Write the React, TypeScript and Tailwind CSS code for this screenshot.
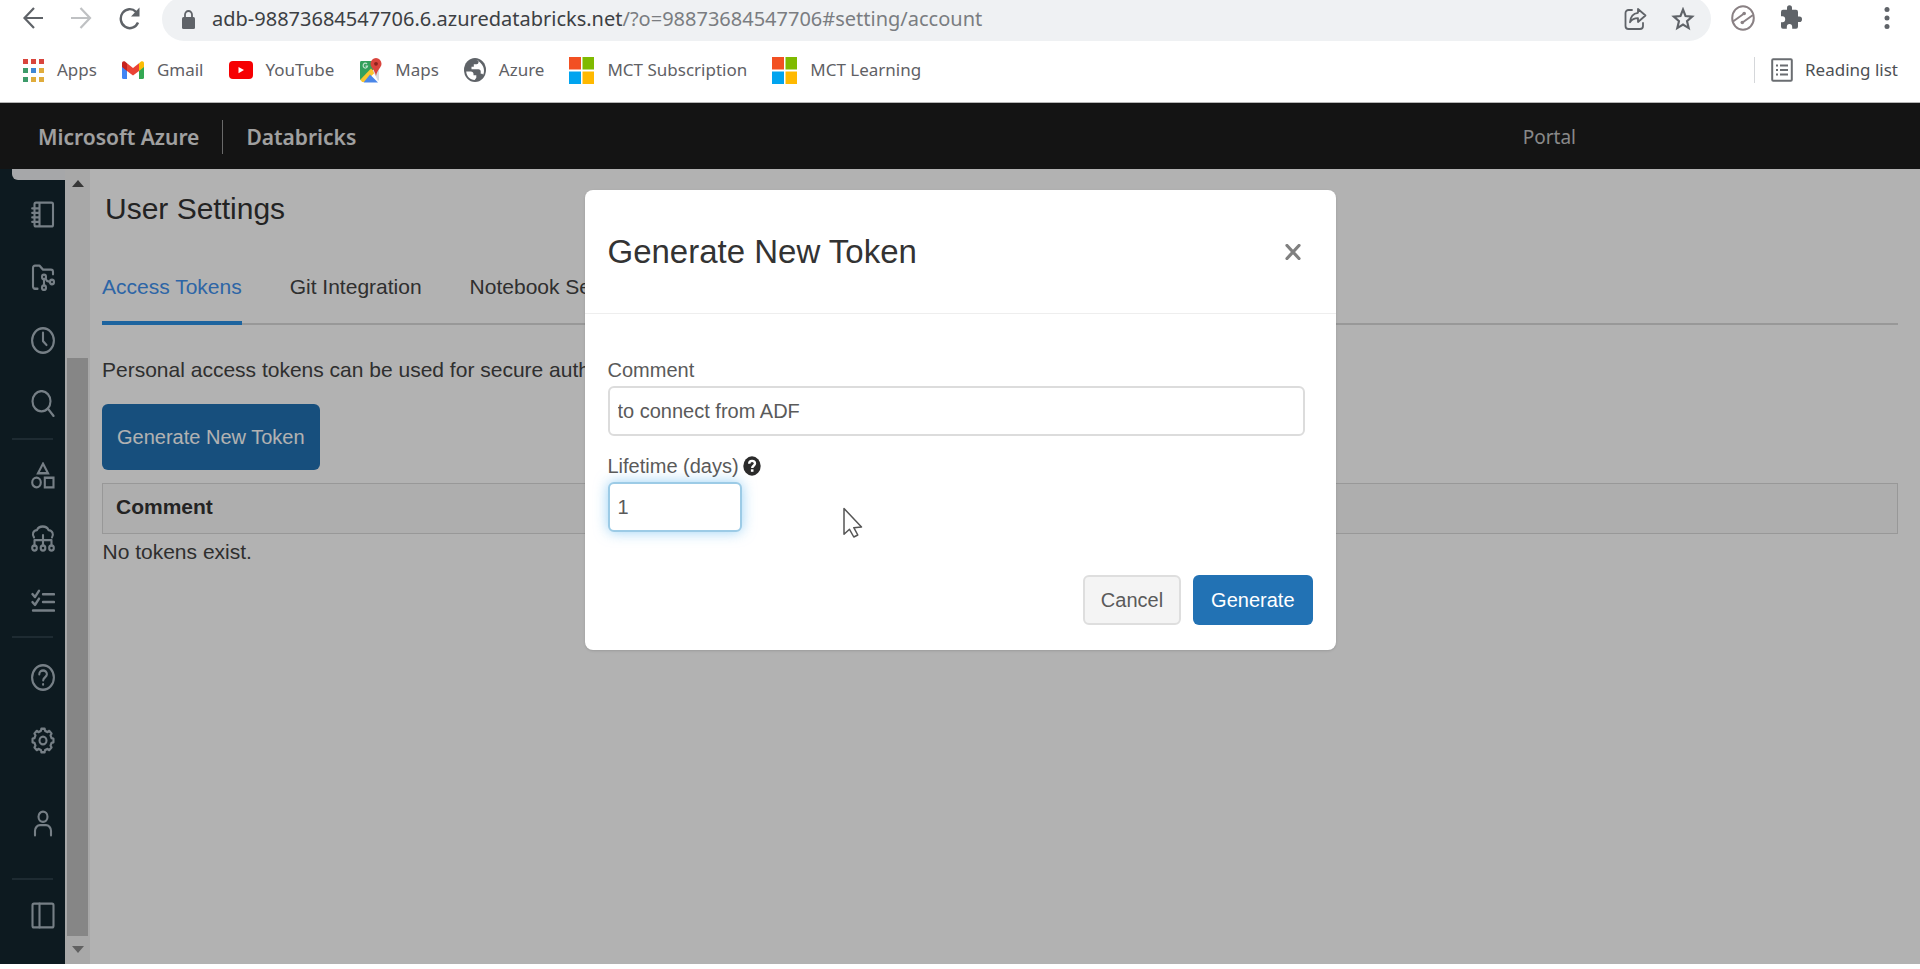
import type { ReactNode } from "react";

const sans = "font-['Liberation_Sans',Arial,sans-serif]";
const chrome = "font-['Noto_Sans','Segoe_UI',sans-serif]";

function LineIcon({ children, width = 2.1 }: { children: ReactNode; width?: number }) {
  return (
    <svg
      viewBox="0 0 24 24"
      preserveAspectRatio="none"
      className="h-[27px] w-6"
      fill="none"
      stroke="currentColor"
      strokeWidth={width}
      strokeLinecap="round"
      strokeLinejoin="round"
      aria-hidden="true"
    >
      {children}
    </svg>
  );
}

function gearOutline(teeth: number, outer: number, inner: number) {
  const step = (Math.PI * 2) / teeth;
  const corners: string[] = [];
  for (let i = 0; i < teeth; i++) {
    const middle = i * step - Math.PI / 2;
    const points: [number, number][] = [
      [-0.3, inner],
      [-0.2, outer],
      [0.2, outer],
      [0.3, inner],
    ];
    for (const [turn, radius] of points) {
      const angle = middle + turn * step;
      corners.push(`${(12 + radius * Math.cos(angle)).toFixed(2)} ${(12 + radius * Math.sin(angle)).toFixed(2)}`);
    }
  }
  return `M${corners.join("L")}Z`;
}

function NavItem({ label, children }: { label: string; children: ReactNode }) {
  return (
    <a href="#nav" aria-label={label} className="flex h-[63px] items-center justify-end pr-[10px] text-[#a9b7c0]">
      {children}
    </a>
  );
}

function Bookmark({ label, children }: { label: string; children: ReactNode }) {
  return (
    <a href="#bookmark" className="flex items-center gap-[13px] text-[17px] leading-6 text-[#5f6165]">
      {children}
      <span>{label}</span>
    </a>
  );
}

function MicrosoftLogo() {
  return (
    <svg viewBox="0 0 25 27" className="h-[27px] w-[25px]" aria-hidden="true">
      <path fill="#f25022" d="M0 0h12v12.500H0z" />
      <path fill="#7fba00" d="M13.500 0h11.500v12.500H13.500z" />
      <path fill="#00a4ef" d="M0 14.500h12V27H0z" />
      <path fill="#ffb900" d="M13.500 14.500h11.500V27H13.500z" />
    </svg>
  );
}

function BrowserToolbar() {
  return (
    <div className="flex h-[41px] items-center pr-[24px] pl-[22px] text-[#5f6368]">
      <button type="button" aria-label="Back" className="mr-6 -mt-[6px]">
        <svg viewBox="0 0 24 24" className="h-6 w-6" fill="none" stroke="currentColor" strokeWidth="2.200" aria-hidden="true">
          <path d="M21 12H3M12 2 2.500 12l9.500 10" />
        </svg>
      </button>
      <button type="button" aria-label="Forward" className="mr-6 -mt-[6px] text-[#bfc1c3]">
        <svg viewBox="0 0 24 24" className="h-6 w-6" fill="none" stroke="currentColor" strokeWidth="2.200" aria-hidden="true">
          <path d="M1 12h18M10.500 2l9.500 10-9.500 10" />
        </svg>
      </button>
      <button type="button" aria-label="Reload" className="mr-5 -mt-[6px]">
        <svg viewBox="0 0 24 24" className="h-6 w-6" fill="none" stroke="currentColor" strokeWidth="2.400" aria-hidden="true">
          <path d="M20 16.500A9 9.500 0 1 1 18 5.800" />
          <path d="M21.500 1.500v9h-8.500z" fill="currentColor" stroke="none" />
        </svg>
      </button>
      <div className="-mt-[3px] flex h-[44px] min-w-0 flex-1 items-center rounded-full bg-[#eff1f3] pr-4 pl-5">
        <svg viewBox="0 0 13 19" className="mr-[17px] h-[19px] w-[13px] shrink-0" aria-hidden="true">
          <rect y="7" width="13" height="12" rx="1.500" fill="#5f6368" />
          <path d="M3 8V4.800a3.500 3.800 0 0 1 7 0V8" fill="none" stroke="#5f6368" strokeWidth="1.800" />
        </svg>
        <span className="min-w-0 flex-1 truncate text-xl leading-7 text-[#3c4043]">
          adb-98873684547706.6.azuredatabricks.net<span className="text-[#7a7d81]">/?o=98873684547706#setting/account</span>
        </span>
        <button type="button" aria-label="Share this page" className="mr-6">
          <svg viewBox="0 0 24 24" className="h-6 w-6" fill="none" stroke="currentColor" strokeWidth="1.800" strokeLinejoin="round" aria-hidden="true">
            <path d="M9 3H5.500A3 3 0 0 0 2.500 6v13a3 3 0 0 0 3 3h11.500a3 3 0 0 0 3-3v-3" strokeLinecap="round" />
            <path d="M15 2l7.500 6.500L15 15v-3.800c-3.800 0-6 1-8 4 .4-5.200 3-8.800 8-9.400z" />
          </svg>
        </button>
        <button type="button" aria-label="Bookmark this tab">
          <svg viewBox="0 0 24 24" className="h-6 w-6" fill="none" stroke="currentColor" strokeWidth="2.100" aria-hidden="true">
            <path d="M12 2.500l2.500 6.500 6.700.6-5.200 4.500 1.700 7L12 17.500l-5.700 3.600 1.700-7L2.800 9.600 9.500 9z" />
          </svg>
        </button>
      </div>
      <button type="button" aria-label="Link helper" className="ml-5 -mt-[6px]">
        <svg viewBox="0 0 24 26" className="h-[26px] w-6" fill="none" stroke="#8a8184" strokeWidth="2" aria-hidden="true">
          <ellipse cx="12" cy="13" rx="10.800" ry="11.800" />
          <path d="M2 16.500 12.800 8.800M11.500 17.500 22 10" />
          <circle cx="13.200" cy="8.500" r="1.800" fill="#8a8184" stroke="none" />
          <circle cx="11.300" cy="17.500" r="1.800" fill="#8a8184" stroke="none" />
        </svg>
      </button>
      <button type="button" aria-label="Extensions" className="ml-6 -mt-[6px]">
        <svg viewBox="0 0 24 24" className="h-[27px] w-6" preserveAspectRatio="none" fill="currentColor" aria-hidden="true">
          <path d="M20.500 11H19V7a2 2 0 0 0-2-2h-4V3.500a2.500 2.500 0 0 0-5 0V5H4a2 2 0 0 0-2 2v3.800h1.500a2.700 2.700 0 0 1 0 5.400H2V20a2 2 0 0 0 2 2h3.800v-1.500a2.700 2.700 0 0 1 5.400 0V22H17a2 2 0 0 0 2-2v-4h1.500a2.500 2.500 0 0 0 0-5z" />
        </svg>
      </button>
      <button type="button" aria-label="Browser menu" className="-mt-[6px] ml-[75px]">
        <svg viewBox="0 0 18 24" className="h-6 w-[18px]" fill="currentColor" aria-hidden="true">
          <circle cx="9" cy="3.500" r="2.500" />
          <circle cx="9" cy="12" r="2.500" />
          <circle cx="9" cy="20.500" r="2.500" />
        </svg>
      </button>
    </div>
  );
}

const appDots = [
  "#d9453d", "#d9453d", "#d9453d",
  "#3d9b6a", "#3f87d6", "#e0ac3c",
  "#3d9b6a", "#e0ac3c", "#e0ac3c",
];

function BookmarksBar() {
  return (
    <nav aria-label="Bookmarks" className="flex h-[61px] items-center gap-[25px] pr-[22px] pb-[3px] pl-[23px]">
      <Bookmark label="Apps">
        <svg viewBox="0 0 21 23" className="h-[23px] w-[21px]" aria-hidden="true">
          {appDots.map((fill, i) => (
            <rect key={i} x={(i % 3) * 8} y={Math.floor(i / 3) * 9} width="5" height="5" fill={fill} />
          ))}
        </svg>
      </Bookmark>
      <Bookmark label="Gmail">
        <svg viewBox="0 0 22 18" className="h-[18px] w-[22px]" aria-hidden="true">
          <path fill="#4285f4" d="M0 5l5 4v9H1.500A1.500 1.500 0 0 1 0 16.500z" />
          <path fill="#34a853" d="M22 5l-5 4v9h3.500a1.500 1.500 0 0 0 1.500-1.500z" />
          <path fill="#fbbc04" d="M17 2.300C19.500-.8 22-.2 22 2.500V6l-5 4z" />
          <path fill="#c5221f" d="M5 2.300C2.500-.8 0-.2 0 2.500V6l5 4z" />
          <path fill="#ea4335" d="M5 2.300l6 4.700 6-4.700V10l-6 4.500L5 10z" />
        </svg>
      </Bookmark>
      <Bookmark label="YouTube">
        <svg viewBox="0 0 24 18" className="h-[18px] w-6" aria-hidden="true">
          <rect width="24" height="18" rx="4" fill="#f60002" />
          <path d="M9.500 6v6.200L15 9z" fill="#fff" />
        </svg>
      </Bookmark>
      <Bookmark label="Maps">
        <svg viewBox="0 0 23 25" className="h-[25px] w-[23px]" aria-hidden="true">
          <path fill="#34a05c" d="M2 3h13v8L2 22.500Q1 22 1 20V4.500Q1 3 2 3z" />
          <path fill="#fbc52d" d="M1.500 21.500 12 10.500l4 4L6 24H3z" />
          <path fill="#d9dce0" d="M14 13l6-3v12l-1 1z" />
          <path fill="#4a86e8" d="M4.500 24.500 11 16.500l8 8z" />
          <path fill="#d9453d" d="M17 0a5.500 5.800 0 0 1 5.500 5.800c0 4-4 5.200-5.500 12.200-1.500-7-5.500-8.200-5.500-12.200A5.500 5.800 0 0 1 17 0z" />
          <circle cx="17" cy="5.800" r="1.900" fill="#8c231d" />
          <path fill="none" stroke="#bfe0cb" strokeWidth="1.200" d="M8 6a2.200 2.400 0 1 0 .5 2.200H6.500" />
        </svg>
      </Bookmark>
      <Bookmark label="Azure">
        <svg viewBox="0 0 22 24" className="h-6 w-[22px]" aria-hidden="true">
          <ellipse cx="11" cy="12" rx="11" ry="12" fill="#5f6368" />
          <path
            fill="#fff"
            d="M2.200 13.500h4.600c1.700 0 2.700 1 2.700 2.500v1.200h2.800v2.600l-1.600 2.200c-4.700-.1-8.200-3.700-8.500-8.500zM12.500 2.200c.6 0 1.300.2 2 .5v1.600c0 1.200-.8 2-1.900 2H9.800v2.400H7.500v2.500h7c1.300 0 2.200 1 2.200 2.200v2.400h1.600l.9.900c1.200-2.300 1-5.600 0-7.900-1.200-2.700-3.500-5.500-6.700-6.600z"
          />
        </svg>
      </Bookmark>
      <Bookmark label="MCT Subscription">
        <MicrosoftLogo />
      </Bookmark>
      <Bookmark label="MCT Learning">
        <MicrosoftLogo />
      </Bookmark>
      <div className="ml-auto flex items-center gap-4">
        <span className="h-[26px] w-px bg-[#d5d7da]" />
        <button type="button" className="flex items-center gap-3 text-[17px] leading-6 text-[#4d5054]">
          <svg viewBox="0 0 22 24" className="h-6 w-[22px]" fill="none" stroke="#6a6d71" strokeWidth="2" aria-hidden="true">
            <rect x="1.200" y="1.200" width="19.600" height="21.600" rx="1" />
            <path d="M9 7.500h8M9 12h8M9 16.500h8M5 7.500h2M5 12h2M5 16.500h2" />
          </svg>
          Reading list
        </button>
      </div>
    </nav>
  );
}

function Sidebar() {
  return (
    <nav aria-label="Workspace" className="w-[65px] shrink-0 bg-[#14262e] pb-3">
      <div className="ml-3 h-[11px] rounded-bl-md bg-[#eef0f2]" />
      <div className="h-[3px]" />
      <NavItem label="Notebooks">
        <LineIcon>
          <path d="M5 1.500h15.500a1.500 1.500 0 0 1 1.500 1.500v18a1.500 1.500 0 0 1-1.500 1.500H5a1.500 1.500 0 0 1-1.500-1.500V3A1.500 1.500 0 0 1 5 1.500zM8.500 1.500v21M1.200 6.500h6M1.200 10.500h6M1.200 14.500h6M1.200 18.500h6" />
        </LineIcon>
      </NavItem>
      <NavItem label="Repos">
        <LineIcon>
          <path d="M6.500 22H4a2 2 0 0 1-2-2V3.500a2 2 0 0 1 2-2h4.500L12 5h8a2 2 0 0 1 2 2v2" />
          <circle cx="13" cy="11.500" r="2" />
          <circle cx="13" cy="21" r="2" />
          <circle cx="21" cy="16" r="2" />
          <path d="M13 13.500V19M14.500 13l1.500 2 3 1" />
        </LineIcon>
      </NavItem>
      <NavItem label="Recents">
        <LineIcon>
          <circle cx="12" cy="12" r="10.900" />
          <path d="M12 5v7.500l3.500 3.500" />
        </LineIcon>
      </NavItem>
      <NavItem label="Search">
        <LineIcon>
          <circle cx="10.500" cy="10" r="9" />
          <path d="M16.800 16.500 22.500 23" />
        </LineIcon>
      </NavItem>
      <hr className="mt-[3px] mr-3 mb-1 ml-3 h-[2px] border-0 bg-[#2b3e48]" />
      <NavItem label="Data">
        <LineIcon>
          <path d="M12 1.500 17 10H7zM13.800 14h8.700v8.500h-8.700z" strokeLinejoin="miter" />
          <circle cx="5.500" cy="18.200" r="4.300" />
        </LineIcon>
      </NavItem>
      <NavItem label="Compute">
        <LineIcon>
          <path d="M3 11C.8 8.500 2 4.800 6 4.500 8 .3 15.500.3 17.500 4.500c4 .3 5.500 4 3.500 6.500M12 9v9M3.500 18v-4.500h17V18" />
          <circle cx="3.500" cy="20.500" r="2.300" />
          <circle cx="12" cy="20.500" r="2.300" />
          <circle cx="20.500" cy="20.500" r="2.300" />
        </LineIcon>
      </NavItem>
      <NavItem label="Jobs">
        <LineIcon width={2.3}>
          <path d="M1.500 5.500 4 8l4-5.500M1.500 12.500 4 15l4-5.500M12 5.500h11M12 12.500h11M2 20h21" />
        </LineIcon>
      </NavItem>
      <hr className="mt-[3px] mr-3 mb-[8px] ml-3 h-[2px] border-0 bg-[#2b3e48]" />
      <NavItem label="Help">
        <LineIcon>
          <circle cx="12" cy="12" r="10.900" />
          <path d="M8.300 9.200c0-4.700 7.600-4.500 7.600 0 0 2.500-3.700 2.600-3.700 5.300M12.100 18v.3" />
        </LineIcon>
      </NavItem>
      <NavItem label="Settings">
        <LineIcon>
          <path d={gearOutline(8, 10.6, 8.8)} />
          <circle cx="12" cy="12" r="3.500" />
        </LineIcon>
      </NavItem>
      <div className="h-5" />
      <NavItem label="Account">
        <LineIcon>
          <circle cx="12" cy="6" r="4.500" />
          <path d="M4 22.500v-4a5 5 0 0 1 5-5h6a5 5 0 0 1 5 5v4" />
        </LineIcon>
      </NavItem>
      <hr className="mt-[23px] mr-3 mb-1 ml-3 h-[2px] border-0 bg-[#2b3e48]" />
      <NavItem label="Toggle sidebar">
        <LineIcon>
          <rect x="1.500" y="1.500" width="21" height="21" rx="1.500" />
          <path d="M8.500 1.500v21" />
        </LineIcon>
      </NavItem>
    </nav>
  );
}

function ScrollRail() {
  return (
    <div aria-hidden="true" className="flex w-[25px] shrink-0 flex-col items-center bg-[#f1f1f1] pt-[11px] pb-[11px]">
      <svg viewBox="0 0 12 7" className="h-[7px] w-3" fill="#505050">
        <path d="M6 0l6 7H0z" />
      </svg>
      <div className="mt-[171px] w-[21px] flex-1 bg-[#c1c1c1]" />
      <svg viewBox="0 0 12 7" className="mt-[10px] h-[7px] w-3" fill="#8b8b8b">
        <path d="M6 7l6-7H0z" />
      </svg>
    </div>
  );
}

function SettingsPage() {
  return (
    <main className="min-w-0 flex-1 pr-[22px] pl-3 text-[21px] leading-7 text-[#444]">
      <h1 className="pt-5 pl-[3px] text-[30px] leading-10 text-[#333]">User Settings</h1>
      <div role="tablist" className="mt-11 flex gap-12 border-b-2 border-[#dadada]">
        <button type="button" role="tab" aria-selected="true" className="-mb-[2px] border-b-4 border-[#2a90e4] pb-5 text-[#4191ee]">
          Access Tokens
        </button>
        <button type="button" role="tab" aria-selected="false" className="pb-[22px]">
          Git Integration
        </button>
        <button type="button" role="tab" aria-selected="false" className="pb-[22px]">
          Notebook Settings
        </button>
      </div>
      <p className="mt-[31px]">Personal access tokens can be used for secure auth</p>
      <button type="button" className="mt-5 h-[66px] rounded-md bg-[#2272b4] px-[15px] text-xl text-white">
        Generate New Token
      </button>
      <table className="mt-[13px] w-full border-collapse text-left">
        <thead>
          <tr>
            <th className="h-[50px] border border-[#dadada] bg-[#fafafa] px-[13px] pb-[3px] font-bold text-[#333]">Comment</th>
          </tr>
        </thead>
        <tbody>
          <tr>
            <td className="pt-1">No tokens exist.</td>
          </tr>
        </tbody>
      </table>
    </main>
  );
}

function TokenDialog() {
  return (
    <div className="absolute inset-0 flex items-start justify-center bg-black/30 pt-[87px]">
      <section
        role="dialog"
        aria-modal="true"
        aria-labelledby="dialog-title"
        className="relative w-[751px] rounded-lg bg-white text-xl leading-6 text-[#5a5a5a] shadow-sm"
      >
        <header className="flex h-[124px] items-center justify-between border-b border-[#eee] pr-[35px] pl-[23px]">
          <h2 id="dialog-title" className="text-[33px] leading-10 text-[#333]">
            Generate New Token
          </h2>
          <button type="button" aria-label="Close">
            <svg viewBox="0 0 16 16" className="h-4 w-4" fill="none" stroke="#808080" strokeWidth="3.200" strokeLinecap="round" aria-hidden="true">
              <path d="M2 1.500l12 13M14 1.500l-12 13" />
            </svg>
          </button>
        </header>
        <div className="px-[23px] pt-11">
          <label htmlFor="comment" className="block pb-1">
            Comment
          </label>
          <input
            id="comment"
            type="text"
            defaultValue="to connect from ADF"
            className="block h-[50px] w-[697px] rounded-md border-2 border-[#dcdcdc] bg-white px-2 outline-none"
          />
          <div className="flex items-center gap-1 pt-[18px] pb-1">
            <label htmlFor="lifetime">Lifetime (days)</label>
            <svg viewBox="0 0 18 20" className="h-5 w-[18px]" aria-hidden="true">
              <ellipse cx="9" cy="10" rx="8.700" ry="9.700" fill="#2b2b2b" />
              <path d="M6.200 7.800c0-4 5.800-3.800 5.800-.3 0 2.200-2.800 2.200-2.800 4.500" fill="none" stroke="#fff" strokeWidth="2.400" />
              <path d="M7.900 13.300h2.600v2.500H7.900z" fill="#fff" />
            </svg>
          </div>
          <input
            id="lifetime"
            type="text"
            defaultValue="1"
            className="block h-[50px] w-[134px] rounded-md border-2 border-[#9ccbe6] bg-white px-2 shadow-[0_0_14px_rgba(100,185,240,0.65)] outline-none"
          />
        </div>
        <footer className="flex justify-end gap-3 pt-[43px] pr-[23px] pb-[25px]">
          <button type="button" className="h-[50px] rounded-md border-2 border-[#dedede] bg-[#f4f4f4] px-4">
            Cancel
          </button>
          <button type="button" className="h-[50px] rounded-md bg-[#2272b4] px-[18px] text-white">
            Generate
          </button>
        </footer>
        <svg viewBox="0 0 20 31" className="absolute top-[317px] left-[258px] h-[31px] w-5" aria-hidden="true">
          <path d="M1 1.500v25.800l5.500-5 4.300 7.700 4-2-4-7.300 7.700-.7z" fill="#fff" stroke="#555" strokeWidth="1.500" strokeLinejoin="round" />
        </svg>
      </section>
    </div>
  );
}

export default function App() {
  return (
    <div className={`flex min-h-screen flex-col bg-white pb-[5px] ${sans}`}>
      <header className={`overflow-hidden border-b border-[#b5b5b5] ${chrome}`}>
        <BrowserToolbar />
        <BookmarksBar />
      </header>
      <div className="relative flex flex-1 flex-col bg-white">
        <header className={`flex h-[66px] items-center bg-[#1d1d1d] pt-[2px] pr-[344px] pl-[38px] text-[21px] leading-7 ${chrome}`}>
          <span className="font-semibold text-[#e6e6e6]">Microsoft Azure</span>
          <span className="mx-[23px] h-[34px] w-px bg-[#999]" />
          <span className="font-semibold text-[#e6e6e6]">Databricks</span>
          <a href="#portal" className="ml-auto text-[19px] text-[#c4c4c4]">
            Portal
          </a>
        </header>
        <div className="flex flex-1">
          <Sidebar />
          <ScrollRail />
          <SettingsPage />
        </div>
        <TokenDialog />
      </div>
    </div>
  );
}
